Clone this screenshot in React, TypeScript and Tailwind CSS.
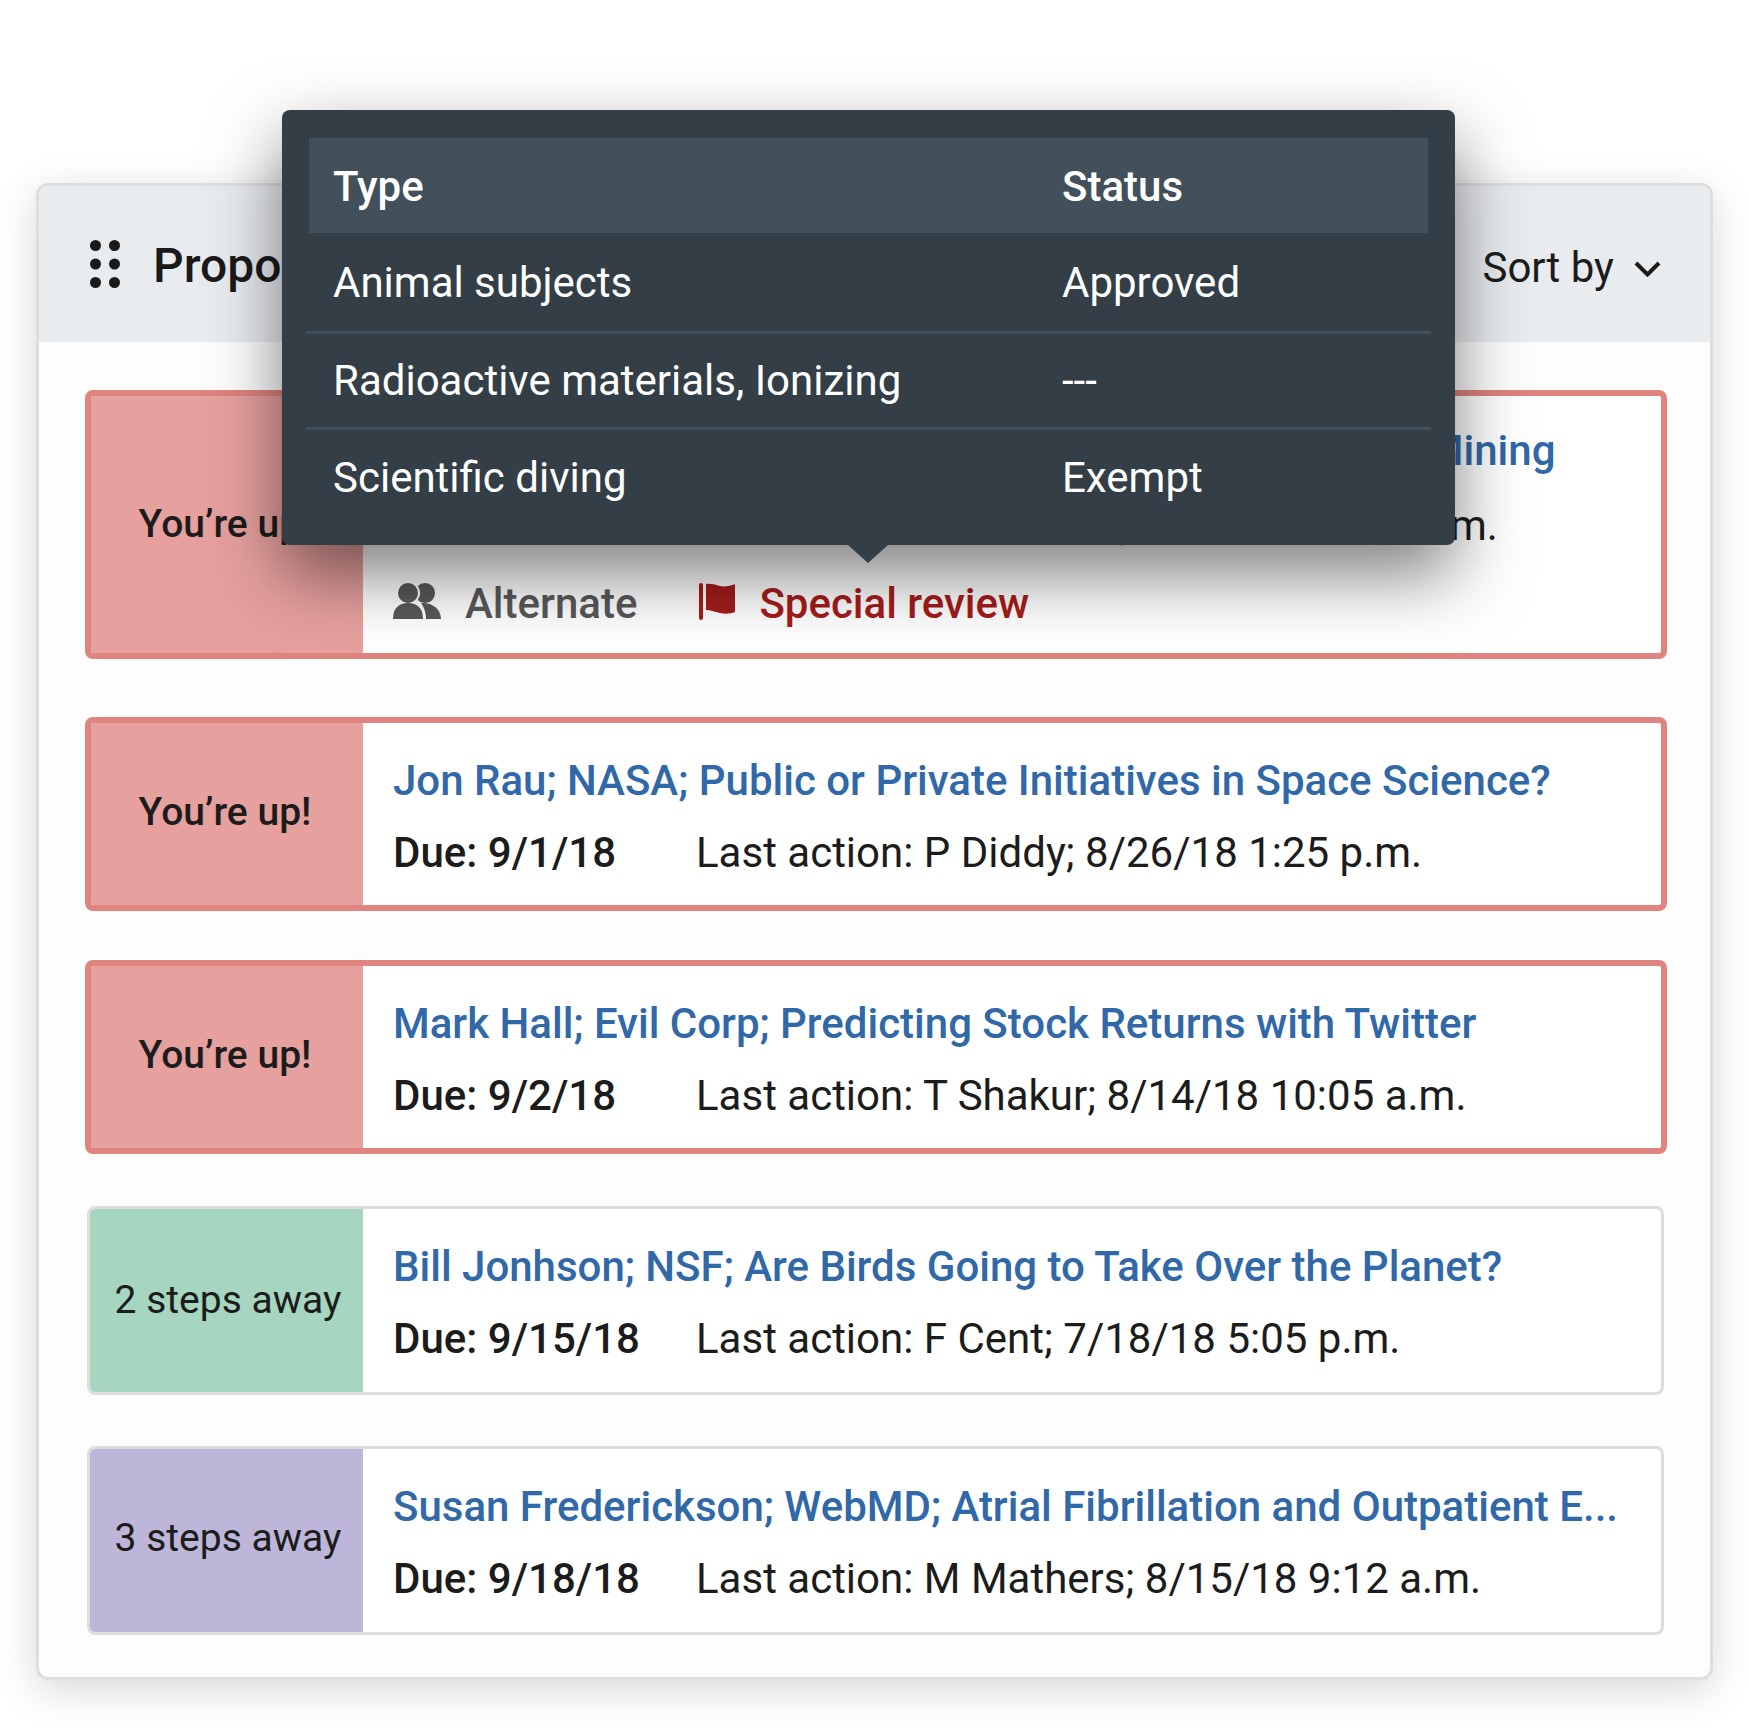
const ROWS = [
  {
    id: 1,
    status: "You’re up!",
    tone: "red",
    title: "Ann Wu; USNS; Reducing River Pollution from Open Pit Mining",
    due: "8/30/18",
    action: "Last action: K Jackson; 8/28/18 11:42 a.m.",
    extra: true,
    wrap: "mb-[58px]",
    nudge: "",
  },
  {
    id: 2,
    status: "You’re up!",
    tone: "red",
    title: "Jon Rau; NASA; Public or Private Initiatives in Space Science?",
    due: "9/1/18",
    action: "Last action: P Diddy; 8/26/18 1:25 p.m.",
    wrap: "mb-[49px]",
    nudge: "pb-[4px]",
  },
  {
    id: 3,
    status: "You’re up!",
    tone: "red",
    title: "Mark Hall; Evil Corp; Predicting Stock Returns with Twitter",
    due: "9/2/18",
    action: "Last action: T Shakur; 8/14/18 10:05 a.m.",
    wrap: "mb-[52px]",
    nudge: "pb-[4px]",
  },
  {
    id: 4,
    status: "2 steps away",
    tone: "green",
    title: "Bill Jonhson; NSF; Are Birds Going to Take Over the Planet?",
    due: "9/15/18",
    action: "Last action: F Cent; 7/18/18 5:05 p.m.",
    wrap: "mb-[51px]",
    nudge: "",
  },
  {
    id: 5,
    status: "3 steps away",
    tone: "purple",
    title: "Susan Frederickson; WebMD; Atrial Fibrillation and Outpatient E...",
    due: "9/18/18",
    action: "Last action: M Mathers; 8/15/18 9:12 a.m.",
    wrap: "",
    nudge: "pb-[4px]",
  },
]

const TYPES = [
  { type: "Animal subjects", status: "Approved", h: "h-[101px]" },
  { type: "Radioactive materials, Ionizing", status: "---", h: "h-[96px]" },
  { type: "Scientific diving", status: "Exempt", h: "h-[95px]" },
]

function DotsIcon() {
  return (
    <svg width="30" height="48" viewBox="0 0 30 48" className="fill-[#1a1a1a]">
      <circle cx="5.500" cy="5.500" r="5.500" />
      <circle cx="24.500" cy="5.500" r="5.500" />
      <circle cx="5.500" cy="24" r="5.500" />
      <circle cx="24.500" cy="24" r="5.500" />
      <circle cx="5.500" cy="42.500" r="5.500" />
      <circle cx="24.500" cy="42.500" r="5.500" />
    </svg>
  )
}

function PeopleIcon() {
  return (
    <svg width="48" height="36" viewBox="0 0 48 36" className="mb-[6px] shrink-0 fill-[#595959]">
      <circle cx="15" cy="10" r="10" />
      <path d="M0 36C0 25 6 20 15 20C24 20 30 25 30 36z" />
      <path d="M24.800 3.100A10 10 0 1 1 24.800 16.900A12 12 0 0 0 24.800 3.100z" />
      <path d="M28 20C38 19 48 25 48 36H33C33 29 31 24 28 20z" />
    </svg>
  )
}

function FlagIcon() {
  return (
    <svg width="36" height="37" viewBox="0 0 36 37" className="mb-[6px] shrink-0 fill-[#a51c1c]">
      <rect x="0" y="0" width="4" height="37" rx="2" />
      <path d="M7 1C12 0 17 2 21 3C26 4 31 3 36 1V29C31 31 26 31 21 30C16 29 12 27 7 27z" />
    </svg>
  )
}

function Row({ row }: { row: (typeof ROWS)[number] }) {
  const isRed = row.tone === "red"
  const cell = isRed ? "bg-[#e6a09e]" : row.tone === "green" ? "bg-[#a6d5c0]" : "bg-[#bdb6d8]"
  const pad = !isRed ? "pt-[34px] pb-[29px] pl-[30px]" : row.extra ? "pt-[31px] pb-[25px] pl-[30px]" : "pt-[34px] pb-[28px] pl-[30px]"
  return (
    <div
      className={`flex overflow-hidden rounded-[8px] bg-white ${row.wrap} ${
        isRed ? "border-[6px] border-[#df847f]" : "mr-[3px] ml-[2px] border-[3px] border-[#dddddd]"
      }`}
    >
      <div
        className={`${cell} ${row.nudge} flex shrink-0 items-center justify-center text-[39px] text-[#1c1c1c] ${
          isRed ? "w-[272px] pr-[4px] font-medium" : "w-[273px] pl-[3px]"
        }`}
      >
        <span className="whitespace-nowrap">{row.status}</span>
      </div>
      <div className={`min-w-0 flex-1 ${pad}`}>
        <div className="h-[48px] whitespace-nowrap text-[42px] leading-[48px] font-medium text-[#3068a8]">
          {row.title}
        </div>
        <div
          className={`flex h-[48px] items-center whitespace-nowrap text-[42px] leading-[48px] text-[#1c1c1c] ${
            row.extra ? "mt-[27px]" : "mt-[24px]"
          }`}
        >
          <span className="w-[303px] font-medium">Due: {row.due}</span>
          <span>{row.action}</span>
        </div>
        {row.extra && (
          <div className="mt-[30px] flex h-[48px] items-center whitespace-nowrap text-[42px] leading-[48px] font-medium">
            <PeopleIcon />
            <span className="ml-[24px] text-[#595959]">Alternate</span>
            <span className="ml-[62px]">
              <FlagIcon />
            </span>
            <span className="ml-[24px] text-[#a51c1c]">Special review</span>
          </div>
        )}
      </div>
    </div>
  )
}

export default function App() {
  return (
    <main className="h-[1728px] w-[1749px] overflow-hidden bg-white pt-[183px] pl-[36px] font-['Roboto',sans-serif]">
      <section className="relative w-[1677px] rounded-[12px] border-[3px] border-[#dedede] bg-[#fdfdfd] shadow-[0_10px_40px_rgba(0,0,0,0.16)]">
        {/* Header */}
        <header className="flex h-[156px] items-center justify-between rounded-t-[10px] bg-[#e9ecef] pr-[49px] pl-[51px]">
          <div className="flex items-center gap-[33px]">
            <DotsIcon />
            <h1 className="mt-[3px] text-[48px] font-medium text-[#1a1a1a]">Proposals</h1>
          </div>
          <div className="mt-[6px] flex items-center gap-[20px] text-[42px] text-[#1c1c1c]">
            Sort by
            <svg width="27" height="17" viewBox="0 0 27 17" fill="none" stroke="#1c1c1c" strokeWidth="4" className="mt-[3px]">
              <path d="M2 3l11.500 11.500L25 3" />
            </svg>
          </div>
        </header>

        {/* Proposal rows */}
        <div className="pt-[48px] pr-[43px] pb-[42px] pl-[46px]">
          {ROWS.map((row) => (
            <Row key={row.id} row={row} />
          ))}
        </div>

        {/* Popover over the first row */}
        <div className="absolute top-[-76px] left-[243px] h-[435px] w-[1173px] rounded-[8px] bg-[#333e47] p-[27px] pt-[28px] text-[42px] text-white shadow-[0_30px_70px_rgba(0,0,0,0.5)]">
          <div className="flex h-[95px] items-center bg-[#41505b] pt-[1px] pl-[24px] font-medium">
            <span className="w-[729px]">Type</span>
            <span>Status</span>
          </div>
          {TYPES.map((t, i) => (
            <div
              key={t.type}
              className={`mx-[-3px] flex items-center pl-[27px] ${t.h} ${
                i < 2 ? "border-b-[3px] border-[#41505b]" : ""
              }`}
            >
              <span className="w-[729px]">{t.type}</span>
              <span>{t.status}</span>
            </div>
          ))}
          <div className="absolute bottom-[-18px] left-[566px] h-0 w-0 border-x-[20px] border-t-[18px] border-x-transparent border-t-[#333e47]" />
        </div>
      </section>
    </main>
  )
}
